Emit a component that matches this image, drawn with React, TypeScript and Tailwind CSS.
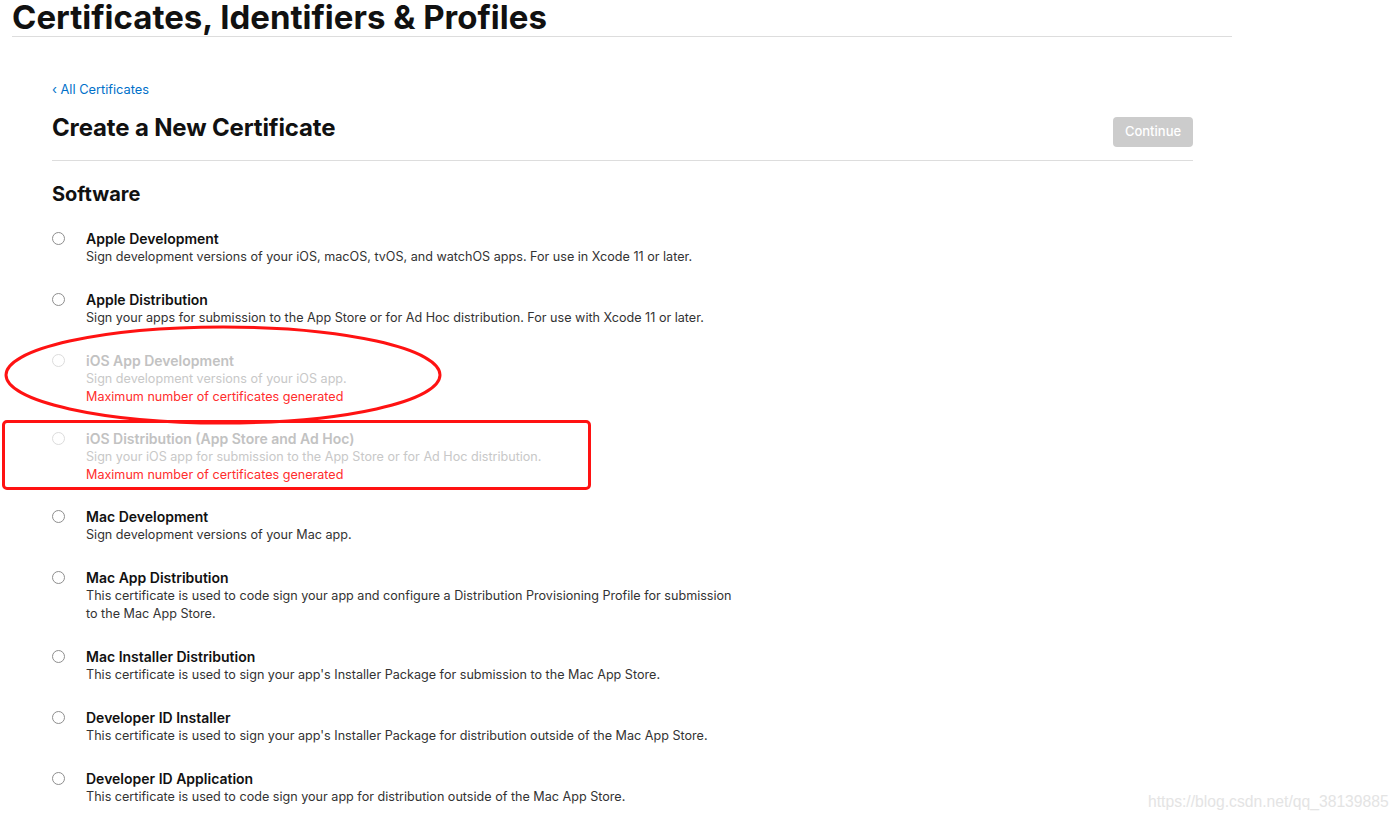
import React from "react";

type Cert = {
  title: string;
  desc: string[];
  disabled?: boolean;
  error?: string;
};

const certs: Cert[] = [
  {
    title: "Apple Development",
    desc: ["Sign development versions of your iOS, macOS, tvOS, and watchOS apps. For use in Xcode 11 or later."],
  },
  {
    title: "Apple Distribution",
    desc: ["Sign your apps for submission to the App Store or for Ad Hoc distribution. For use with Xcode 11 or later."],
  },
  {
    title: "iOS App Development",
    desc: ["Sign development versions of your iOS app."],
    disabled: true,
    error: "Maximum number of certificates generated",
  },
  {
    title: "iOS Distribution (App Store and Ad Hoc)",
    desc: ["Sign your iOS app for submission to the App Store or for Ad Hoc distribution."],
    disabled: true,
    error: "Maximum number of certificates generated",
  },
  {
    title: "Mac Development",
    desc: ["Sign development versions of your Mac app."],
  },
  {
    title: "Mac App Distribution",
    desc: [
      "This certificate is used to code sign your app and configure a Distribution Provisioning Profile for submission",
      "to the Mac App Store.",
    ],
  },
  {
    title: "Mac Installer Distribution",
    desc: ["This certificate is used to sign your app's Installer Package for submission to the Mac App Store."],
  },
  {
    title: "Developer ID Installer",
    desc: ["This certificate is used to sign your app's Installer Package for distribution outside of the Mac App Store."],
  },
  {
    title: "Developer ID Application",
    desc: ["This certificate is used to code sign your app for distribution outside of the Mac App Store."],
  },
];

function CertRow({ cert }: { cert: Cert }) {
  const off = cert.disabled;
  return (
    <label className="flex">
      <div className="w-[34px] shrink-0 pt-[3px]">
        <span
          className={`block h-[13px] w-[13px] rounded-full border bg-white ${
            off ? "border-[#dcdcdc]" : "border-[#8e8e8e]"
          }`}
        />
      </div>
      <div>
        <p className={`text-[14px] font-semibold leading-[19px] ${off ? "text-[#c2c2c2]" : "text-[#111]"}`}>
          {cert.title}
        </p>
        {cert.desc.map((d) => (
          <p key={d} className={`whitespace-nowrap text-[12.6px] leading-[18px] ${off ? "text-[#c8c8c8]" : "text-[#333]"}`}>
            {d}
          </p>
        ))}
        {cert.error && <p className="text-[12.6px] leading-[17px] text-[#ff2d2d]">{cert.error}</p>}
      </div>
    </label>
  );
}

export default function App() {
  return (
    <div className="relative h-[818px] w-full overflow-hidden bg-white font-['Inter',sans-serif] antialiased">
      <header className="mx-[12px] w-[1220px] border-b border-[#dddddd]">
        <h1 className="h-[36px] pt-[1px] text-[33px] font-bold leading-[32px] text-[#111]">
          Certificates, Identifiers &amp; Profiles
        </h1>
      </header>

      <main className="ml-[52px] w-[1141px]">
        <a className="mt-[45px] block text-[12.8px] leading-[16px] text-[#0070c9]">‹ All Certificates</a>

        <div className="mt-[15px] flex items-start justify-between border-b border-[#dddddd] pb-[13px]">
          <h2 className="text-[24px] font-bold leading-[30px] tracking-[-0.15px] text-[#111]">Create a New Certificate</h2>
          <button
            type="button"
            disabled
            className="mt-[4px] h-[30px] w-[80px] rounded-[4px] bg-[#cccccc] text-[13px] font-medium text-white"
          >
            Continue
          </button>
        </div>

        <h3 className="mt-[21px] text-[20px] font-bold leading-[24px] text-[#111]">Software</h3>

        <div className="mt-[23px] flex flex-col gap-[24px]">
          {certs.map((c) => (
            <CertRow key={c.title} cert={c} />
          ))}
        </div>
      </main>

      {/* hand-drawn annotations on the screenshot */}
      <svg className="pointer-events-none absolute left-[3px] top-[324px]" width="442" height="102" viewBox="0 0 442 102">
        <ellipse cx="220" cy="51" rx="217" ry="48" fill="none" stroke="#ff1212" strokeWidth="3" />
      </svg>
      <div className="pointer-events-none absolute left-[2px] top-[420px] h-[70px] w-[589px] rounded-[5px] border-[3px] border-[#ff1212]" />

      <span className="pointer-events-none absolute left-[1148px] top-[790px] font-['Liberation_Sans',sans-serif] text-[15.7px] text-[#e4e4e4]">
        https://blog.csdn.net/qq_38139885
      </span>
    </div>
  );
}
